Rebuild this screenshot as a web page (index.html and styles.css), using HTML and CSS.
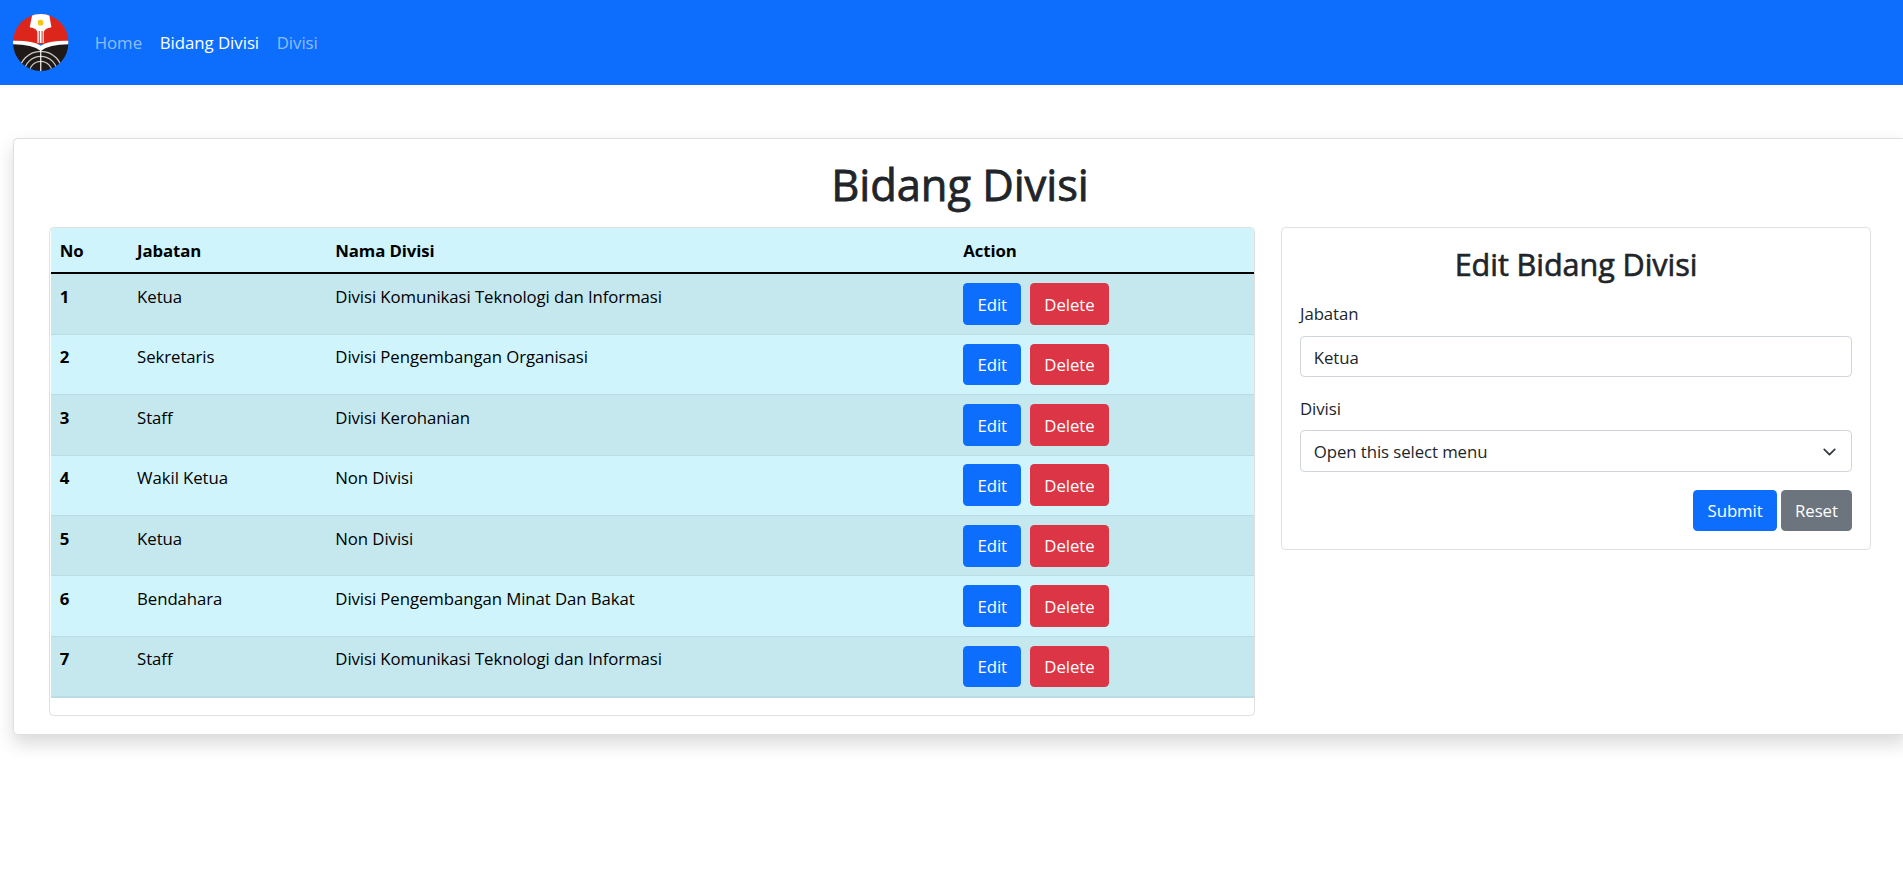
FILE: index.html
```html
<!DOCTYPE html>
<html lang="id">
<head>
<meta charset="utf-8">
<title>Bidang Divisi</title>
<link rel="stylesheet" href="styles.css">
</head>
<body>
<nav class="navbar">
  <a class="brand" href="#">
    <svg class="logo" viewBox="39 42 166 171" preserveAspectRatio="none" aria-label="Logo">
      <defs><clipPath id="disc"><ellipse cx="122" cy="127.5" rx="83" ry="85.5"/></clipPath></defs>
      <g clip-path="url(#disc)">
        <rect x="39" y="42" width="166" height="90" fill="#dc261c"/>
        <path d="M39 132Q95 130 122 150Q149 130 205 132V213H39z" fill="#1f1a17"/>
        <path d="M39 122Q100 121 122 137Q144 121 205 122V133Q147 133 122 153Q97 133 39 133z" fill="#fff"/>
        <path d="M97 42H147L154 82Q133 85 131 97V129H112V97Q110 85 89 82z" fill="#fff"/>
        <path d="M117.500 93V130M126 93V130" stroke="#dc261c" stroke-width="3"/>
        <circle cx="121.500" cy="68" r="8.500" fill="#f9c50b"/>
        <g fill="none" stroke="#c9c7c6" stroke-width="4">
          <circle cx="122" cy="218" r="64"/><circle cx="122" cy="218" r="49"/><circle cx="122" cy="218" r="34"/>
        </g>
        <path d="M122 148V213" stroke="#fff" stroke-width="3.500"/>
      </g>
    </svg>
  </a>
  <a class="nav-link" href="#">Home</a>
  <a class="nav-link active" href="#">Bidang Divisi</a>
  <a class="nav-link" href="#">Divisi</a>
</nav>
<main class="page">
  <section class="card board">
    <h1 class="title">Bidang Divisi</h1>
    <div class="columns">
      <div class="card table-card">
        <table class="table">
          <colgroup><col class="col-no"><col class="col-role"><col class="col-name"><col></colgroup>
          <thead><tr><th>No</th><th>Jabatan</th><th>Nama Divisi</th><th>Action</th></tr></thead>
          <tbody>
            <tr><th>1</th><td>Ketua</td><td>Divisi Komunikasi Teknologi dan Informasi</td><td><div class="actions"><button class="btn primary">Edit</button><button class="btn danger">Delete</button></div></td></tr>
            <tr><th>2</th><td>Sekretaris</td><td>Divisi Pengembangan Organisasi</td><td><div class="actions"><button class="btn primary">Edit</button><button class="btn danger">Delete</button></div></td></tr>
            <tr><th>3</th><td>Staff</td><td>Divisi Kerohanian</td><td><div class="actions"><button class="btn primary">Edit</button><button class="btn danger">Delete</button></div></td></tr>
            <tr><th>4</th><td>Wakil Ketua</td><td>Non Divisi</td><td><div class="actions"><button class="btn primary">Edit</button><button class="btn danger">Delete</button></div></td></tr>
            <tr><th>5</th><td>Ketua</td><td>Non Divisi</td><td><div class="actions"><button class="btn primary">Edit</button><button class="btn danger">Delete</button></div></td></tr>
            <tr><th>6</th><td>Bendahara</td><td>Divisi Pengembangan Minat Dan Bakat</td><td><div class="actions"><button class="btn primary">Edit</button><button class="btn danger">Delete</button></div></td></tr>
            <tr><th>7</th><td>Staff</td><td>Divisi Komunikasi Teknologi dan Informasi</td><td><div class="actions"><button class="btn primary">Edit</button><button class="btn danger">Delete</button></div></td></tr>
          </tbody>
        </table>
      </div>
      <form class="card form-card">
        <h3 class="form-title">Edit Bidang Divisi</h3>
        <label class="label" for="jabatan">Jabatan</label>
        <input class="control" id="jabatan" type="text" value="Ketua">
        <div class="label">Divisi</div>
        <div class="control select" role="combobox"><span>Open this select menu</span>
          <svg class="chevron" viewBox="0 0 16 16"><path d="M2 5l6 6 6-6" fill="none" stroke="#343a40" stroke-width="2" stroke-linecap="round" stroke-linejoin="round"/></svg>
        </div>
        <div class="form-actions"><button class="btn primary" type="button">Submit</button><button class="btn secondary" type="button">Reset</button></div>
      </form>
    </div>
  </section>
</main>
</body>
</html>
```
FILE: styles.css
```css
* { box-sizing: border-box; }
body {
  margin: 0;
  min-height: 872px;
  overflow: hidden;
  background: #fff;
  color: #212529;
  font-family: "Open Sans", "Noto Sans", sans-serif;
  font-size: 16.8px;
  line-height: 26.4px;
  letter-spacing: -.08px;
}
.navbar {
  display: flex;
  align-items: center;
  height: 85px;
  padding-left: 13px;
  background: #0d6efd;
  letter-spacing: -.02px;
}
.brand { display: flex; margin-right: 17.4px; }
.logo { display: block; width: 55.5px; height: 57px; }
.nav-link {
  padding: 9.8px 8.8px 7.8px;
  color: rgba(255, 255, 255, .55);
  text-decoration: none;
}
.nav-link.active { color: #fff; }
.page { padding: 53px 0 0 13px; }
.card {
  background: #fff;
  border: 1px solid #dfdfdf;
  border-radius: 4.4px;
}
.board {
  width: 1894px;
  padding: 17.6px 35px 17.4px;
  box-shadow: 0 8.8px 17.6px rgba(0, 0, 0, .15);
}
.title {
  margin: 0;
  padding: 2.4px 0 15.4px;
  font-size: 43.5px;
  font-weight: 500;
  line-height: 52.8px;
  text-align: center;
  -webkit-text-stroke: .8px #212529;
}
.columns {
  display: flex;
  align-items: flex-start;
  gap: 26px;
}
.table-card {
  width: 1206px;
  padding: 0 0 17.2px 1px;
}
.table {
  width: 100%;
  table-layout: fixed;
  border-collapse: separate;
  border-spacing: 0;
  color: #000;
  background: #cff4fc;
}
.col-no { width: 77.3px; }
.col-role { width: 198.2px; }
.col-name { width: 628px; }
.table th, .table td {
  padding: 9.6px 8.8px 8px;
  text-align: left;
  vertical-align: top;
  border-bottom: 1px solid #badce3;
}
.table td:last-child { padding: 8.8px; }
.table th { letter-spacing: -.12px; }
.table thead th { padding-bottom: 8.3px; border-bottom: 2px solid #000; }
.table tbody tr:nth-child(odd) { background: #c5e8ef; }
.table tbody tr:last-child > * { border-bottom-width: 2px; }
.actions { display: flex; gap: 9px; }
.btn {
  height: 41.8px;
  padding: 1.6px 14.2px 0;
  border: 0;
  border-radius: 4.4px;
  color: #fff;
  font: inherit;
  letter-spacing: inherit;
}
.primary { background: #0d6efd; }
.danger { background: #dc3545; }
.secondary { background: #6c757d; }
.form-card {
  width: 590px;
  padding: 17.6px 18px;
}
.form-title {
  margin: 0;
  padding: 0 0 17.6px;
  font-size: 30.6px;
  font-weight: 500;
  line-height: 37px;
  text-align: center;
  -webkit-text-stroke: .6px #212529;
}
.label { display: block; padding: .8px 0 8px; }
.control {
  display: flex;
  align-items: center;
  justify-content: space-between;
  width: 100%;
  height: 41.8px;
  margin-bottom: 17.6px;
  padding: 1.5px 13.2px 0 12.8px;
  border: 1px solid #ced4da;
  border-radius: 4.4px;
  background: #fff;
  color: #212529;
  font: inherit;
  letter-spacing: inherit;
}
.chevron { width: 17px; height: 14px; }
.form-actions {
  display: flex;
  justify-content: flex-end;
  gap: 4px;
}
```
